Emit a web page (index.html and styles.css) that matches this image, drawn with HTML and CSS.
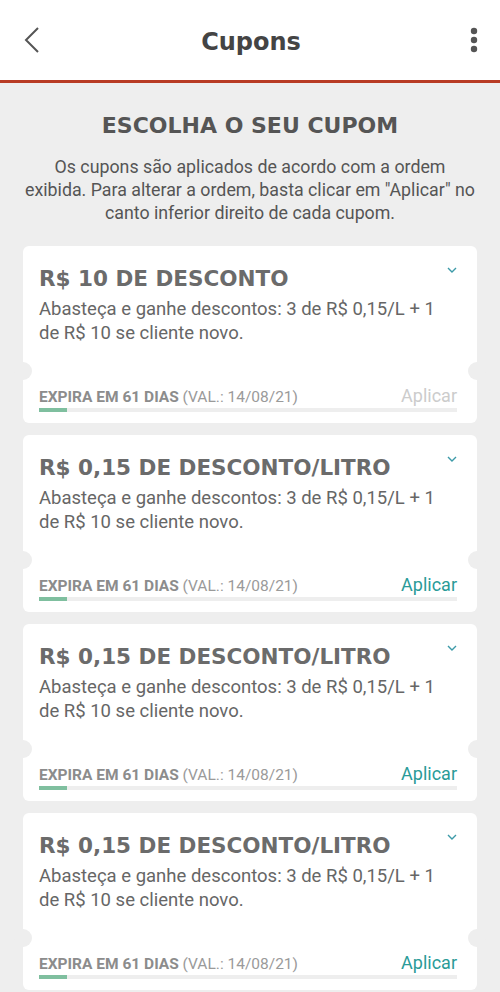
FILE: index.html
```html
<!DOCTYPE html>
<html lang="pt-BR">
<head>
    <meta charset="UTF-8">
    <meta name="viewport" content="width=device-width, initial-scale=1.0">
    <title>Cupons</title>
    <link rel="stylesheet" href="styles.css">
</head>
<body>
    <div class="topbar">
        <button class="icon-btn back" aria-label="Voltar">
            <svg class="back-icon" viewBox="0 0 16 26" fill="none" stroke="currentColor" stroke-width="2">
                <polyline points="14,1 2,13 14,25"></polyline>
            </svg>
        </button>
        <h1 class="topbar-title">Cupons</h1>
        <button class="icon-btn more" aria-label="Mais opções">
            <svg class="more-icon" viewBox="0 0 8 26" fill="currentColor">
                <circle cx="4" cy="4" r="3.2"></circle>
                <circle cx="4" cy="13" r="3.2"></circle>
                <circle cx="4" cy="22" r="3.2"></circle>
            </svg>
        </button>
    </div>

    <div class="content">
        <h2 class="section-title">ESCOLHA O SEU CUPOM</h2>
        <p class="section-text">Os cupons são aplicados de acordo com a ordem exibida. Para alterar a ordem, basta clicar em "Aplicar" no canto inferior direito de cada cupom.</p>

        <div class="coupon-list">
            <div class="coupon">
                <svg class="chevron" viewBox="0 0 10 6" fill="none" stroke="currentColor" stroke-width="1.4">
                    <polyline points="1,1 5,5 9,1"></polyline>
                </svg>
                <div class="coupon-title">R$ 10 DE DESCONTO</div>
                <div class="coupon-desc">Abasteça e ganhe descontos: 3 de R$ 0,15/L + 1 de R$ 10 se cliente novo.</div>
                <div class="coupon-footer">
                    <span class="expire"><b>EXPIRA EM 61 DIAS</b> (VAL.: 14/08/21)</span>
                    <span class="apply disabled">Aplicar</span>
                </div>
                <div class="progress"><div class="progress-fill" style="width: 28px"></div></div>
            </div>

            <div class="coupon">
                <svg class="chevron" viewBox="0 0 10 6" fill="none" stroke="currentColor" stroke-width="1.4">
                    <polyline points="1,1 5,5 9,1"></polyline>
                </svg>
                <div class="coupon-title">R$ 0,15 DE DESCONTO/LITRO</div>
                <div class="coupon-desc">Abasteça e ganhe descontos: 3 de R$ 0,15/L + 1 de R$ 10 se cliente novo.</div>
                <div class="coupon-footer">
                    <span class="expire"><b>EXPIRA EM 61 DIAS</b> (VAL.: 14/08/21)</span>
                    <span class="apply">Aplicar</span>
                </div>
                <div class="progress"><div class="progress-fill" style="width: 28px"></div></div>
            </div>

            <div class="coupon">
                <svg class="chevron" viewBox="0 0 10 6" fill="none" stroke="currentColor" stroke-width="1.4">
                    <polyline points="1,1 5,5 9,1"></polyline>
                </svg>
                <div class="coupon-title">R$ 0,15 DE DESCONTO/LITRO</div>
                <div class="coupon-desc">Abasteça e ganhe descontos: 3 de R$ 0,15/L + 1 de R$ 10 se cliente novo.</div>
                <div class="coupon-footer">
                    <span class="expire"><b>EXPIRA EM 61 DIAS</b> (VAL.: 14/08/21)</span>
                    <span class="apply">Aplicar</span>
                </div>
                <div class="progress"><div class="progress-fill" style="width: 28px"></div></div>
            </div>

            <div class="coupon">
                <svg class="chevron" viewBox="0 0 10 6" fill="none" stroke="currentColor" stroke-width="1.4">
                    <polyline points="1,1 5,5 9,1"></polyline>
                </svg>
                <div class="coupon-title">R$ 0,15 DE DESCONTO/LITRO</div>
                <div class="coupon-desc">Abasteça e ganhe descontos: 3 de R$ 0,15/L + 1 de R$ 10 se cliente novo.</div>
                <div class="coupon-footer">
                    <span class="expire"><b>EXPIRA EM 61 DIAS</b> (VAL.: 14/08/21)</span>
                    <span class="apply">Aplicar</span>
                </div>
                <div class="progress"><div class="progress-fill" style="width: 28px"></div></div>
            </div>
        </div>
    </div>
</body>
</html>
```

FILE: styles.css
```css
* {
    margin: 0;
    padding: 0;
    box-sizing: border-box;
}

body {
    font-family: Roboto, 'Liberation Sans', sans-serif;
    background: #eeeeee;
    color: #555;
    overflow: hidden;
}

.topbar {
    height: 83px;
    background: #fff;
    border-bottom: 3px solid #b83b24;
    display: grid;
    grid-template-columns: 60px 1fr 60px;
    align-items: center;
    padding: 0 22px 0 24px;
}

.icon-btn {
    background: none;
    border: none;
    color: #555;
    display: flex;
    align-items: center;
}

.icon-btn.more {
    justify-content: flex-end;
}

.back-icon {
    width: 16px;
    height: 26px;
}

.more-icon {
    width: 8px;
    height: 26px;
}

.topbar-title {
    font-family: 'DejaVu Sans', sans-serif;
    font-size: 24px;
    font-weight: bold;
    color: #444;
    text-align: center;
    margin-top: 3px;
}

.content {
    padding: 28px 23px 0;
}

.section-title {
    font-family: 'DejaVu Sans', sans-serif;
    font-size: 22px;
    font-weight: bold;
    line-height: 30px;
    color: #555;
    text-align: center;
}

.section-text {
    margin-top: 14px;
    font-size: 17.8px;
    line-height: 23px;
    color: #555;
    text-align: center;
}

.coupon-list {
    margin-top: 22px;
    display: flex;
    flex-direction: column;
    gap: 12px;
}

.coupon {
    position: relative;
    background: #fff;
    border-radius: 6px;
    height: 177px;
    padding: 18px 20px 0 16px;
}

/* ticket notches */
.coupon::before,
.coupon::after {
    content: '';
    position: absolute;
    top: 116px;
    width: 18px;
    height: 18px;
    border-radius: 50%;
    background: #eeeeee;
}

.coupon::before {
    left: -9px;
}

.coupon::after {
    right: -9px;
}

.chevron {
    position: absolute;
    top: 21px;
    right: 20px;
    width: 10px;
    height: 6px;
    color: #3c9aa8;
}

.coupon-title {
    font-family: 'DejaVu Sans', sans-serif;
    font-size: 21.5px;
    font-weight: bold;
    line-height: 30px;
    color: #6b6b6b;
}

.coupon-desc {
    margin-top: 3px;
    font-size: 18.5px;
    line-height: 24px;
    color: #666;
}

.coupon-footer {
    margin-top: 40px;
    display: flex;
    align-items: baseline;
    justify-content: space-between;
    height: 22px;
}

.expire {
    font-size: 15.5px;
    color: #9a9a9a;
}

.expire b {
    font-weight: bold;
    color: #8c8c8c;
}

.apply {
    font-size: 18px;
    color: #2a9b98;
}

.apply.disabled {
    color: #cccccc;
}

.progress {
    margin-top: 1px;
    height: 4px;
    background: #eeeeee;
}

.progress-fill {
    height: 100%;
    background: #7fbf9f;
}
```
